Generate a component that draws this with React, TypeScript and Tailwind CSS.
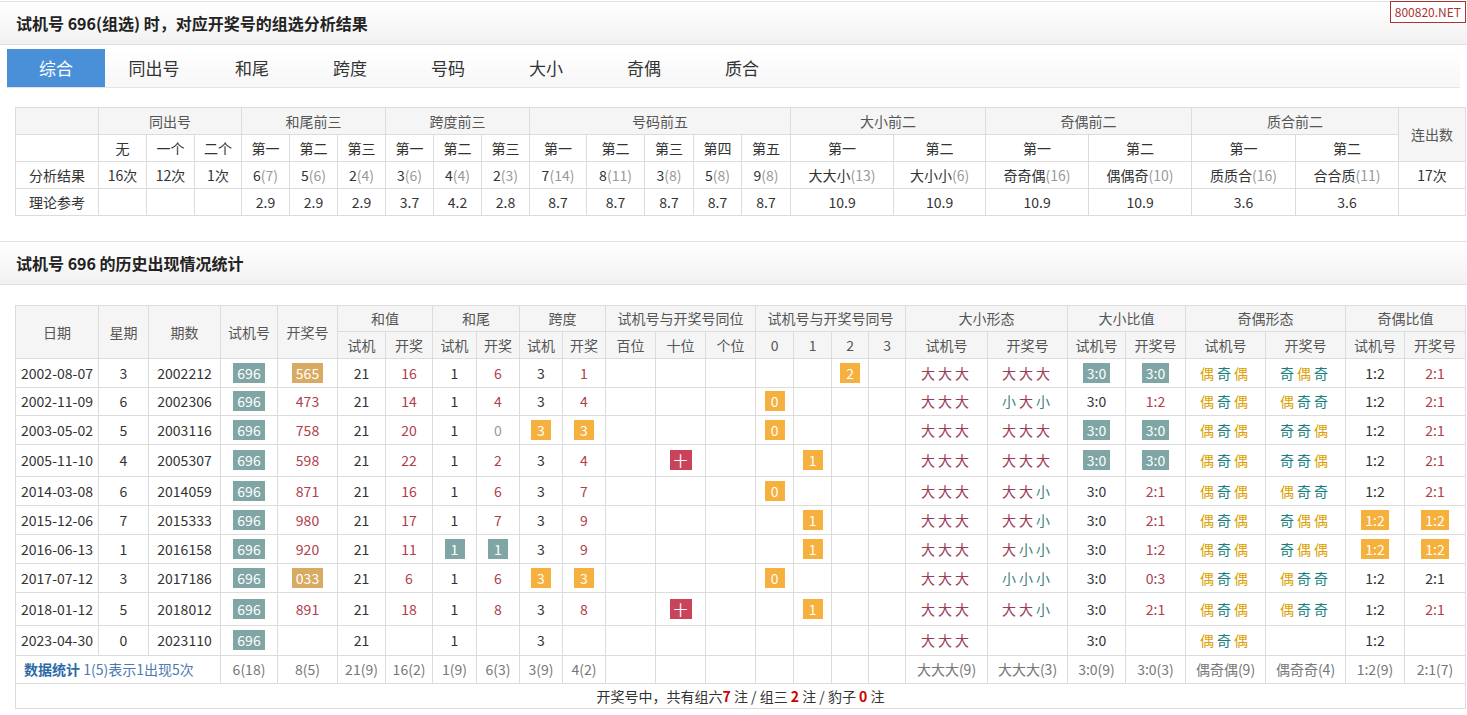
import React from "react";

type C = string | { t: string; c?: string; b?: string };

const R = "text-[#b0404a]";
const TEAL = "bg-[#7fa5a5]";
const TAN = "bg-[#d9ab62]";
const ORG = "bg-[#f6b03e]";
const RED = "bg-[#c9435a]";

function r(t: string): C {
  return { t, c: R };
}
function b(t: string, bg: string): C {
  return { t, b: bg };
}

function Chars({ s }: { s: string }) {
  return (
    <span className="tracking-[3px]">
      {s.split("").map((ch, i) => {
        const cls =
          ch === "大" ? "text-[#9c3d55]" : ch === "小" ? "text-[#3f8080]" : ch === "偶" ? "text-[#dd9f00]" : "text-[#187f80]";
        return (
          <span key={i} className={cls}>
            {ch}
          </span>
        );
      })}
    </span>
  );
}

const E = "";
const rows: C[][] = [
  ["2002-08-07", "3", "2002212", b("696", TEAL), b("565", TAN), "21", r("16"), "1", r("6"), "3", r("1"), E, E, E, E, E, b("2", ORG), E, "大大大", "大大大", b("3:0", TEAL), b("3:0", TEAL), "偶奇偶", "奇偶奇", "1:2", r("2:1")],
  ["2002-11-09", "6", "2002306", b("696", TEAL), r("473"), "21", r("14"), "1", r("4"), "3", r("4"), E, E, E, b("0", ORG), E, E, E, "大大大", "小大小", "3:0", r("1:2"), "偶奇偶", "偶奇奇", "1:2", r("2:1")],
  ["2003-05-02", "5", "2003116", b("696", TEAL), r("758"), "21", r("20"), "1", { t: "0", c: "text-[#999]" }, b("3", ORG), b("3", ORG), E, E, E, b("0", ORG), E, E, E, "大大大", "大大大", b("3:0", TEAL), b("3:0", TEAL), "偶奇偶", "奇奇偶", "1:2", r("2:1")],
  ["2005-11-10", "4", "2005307", b("696", TEAL), r("598"), "21", r("22"), "1", r("2"), "3", r("4"), E, b("十", RED), E, E, b("1", ORG), E, E, "大大大", "大大大", b("3:0", TEAL), b("3:0", TEAL), "偶奇偶", "奇奇偶", "1:2", r("2:1")],
  ["2014-03-08", "6", "2014059", b("696", TEAL), r("871"), "21", r("16"), "1", r("6"), "3", r("7"), E, E, E, b("0", ORG), E, E, E, "大大大", "大大小", "3:0", r("2:1"), "偶奇偶", "偶奇奇", "1:2", r("2:1")],
  ["2015-12-06", "7", "2015333", b("696", TEAL), r("980"), "21", r("17"), "1", r("7"), "3", r("9"), E, E, E, E, b("1", ORG), E, E, "大大大", "大大小", "3:0", r("2:1"), "偶奇偶", "奇偶偶", b("1:2", ORG), b("1:2", ORG)],
  ["2016-06-13", "1", "2016158", b("696", TEAL), r("920"), "21", r("11"), b("1", TEAL), b("1", TEAL), "3", r("9"), E, E, E, E, b("1", ORG), E, E, "大大大", "大小小", "3:0", r("1:2"), "偶奇偶", "奇偶偶", b("1:2", ORG), b("1:2", ORG)],
  ["2017-07-12", "3", "2017186", b("696", TEAL), b("033", TAN), "21", r("6"), "1", r("6"), b("3", ORG), b("3", ORG), E, E, E, b("0", ORG), E, E, E, "大大大", "小小小", "3:0", r("0:3"), "偶奇偶", "偶奇奇", "1:2", "2:1"],
  ["2018-01-12", "5", "2018012", b("696", TEAL), r("891"), "21", r("18"), "1", r("8"), "3", r("8"), E, b("十", RED), E, E, b("1", ORG), E, E, "大大大", "大大小", "3:0", r("2:1"), "偶奇偶", "偶奇奇", "1:2", r("2:1")],
  ["2023-04-30", "0", "2023110", b("696", TEAL), E, "21", E, "1", E, "3", E, E, E, E, E, E, E, E, "大大大", E, "3:0", E, "偶奇偶", E, "1:2", E],
];
const rowH = [29, 28, 29, 32, 29, 29, 29, 29, 33, 30];

const histW = [83, 50, 72, 57, 60, 48, 47, 44, 43, 43, 43, 50, 50, 50, 38, 38, 37, 37, 82, 80, 58, 60, 80, 80, 59, 61];

function Cell({ v, i }: { v: C; i: number }) {
  const isChars = (i === 18 || i === 19 || i === 22 || i === 23) && typeof v === "string" && v !== "";
  if (isChars) return <Chars s={v as string} />;
  if (typeof v === "string") return <>{v}</>;
  if (v.b)
    return (
      <span className={`inline-block ${v.b} text-white px-[4px] leading-[20px] min-w-[20px]`}>{v.t}</span>
    );
  return <span className={v.c}>{v.t}</span>;
}

const sumW = [83, 48, 48, 47, 48, 48, 48, 48, 48, 48, 57, 58, 49, 48, 49, 103, 92, 103, 103, 104, 103, 67];

function Gray({ a, n }: { a: string; n: string }) {
  return (
    <>
      {a}
      <span className="text-[#999]">({n})</span>
    </>
  );
}

function TitleBar({ children }: { children: React.ReactNode }) {
  return (
    <div className="h-[44px] flex items-center px-[16px] bg-gradient-to-b from-white to-[#f1f1f1] border-y border-[#e2e2e2] text-[16px] font-bold text-[#222]">
      {children}
    </div>
  );
}

const td = "border border-[#dcdcdc] text-center font-normal";

export default function App() {
  const tabs = ["综合", "同出号", "和尾", "跨度", "号码", "大小", "奇偶", "质合"];
  return (
    <div
      className="w-[1467px] h-[715px] bg-white text-[#333] text-[14px] relative overflow-hidden"
      style={{ fontFamily: '"Noto Sans CJK SC", "Noto Sans", sans-serif' }}
    >
      <div className="absolute right-[1px] top-[1px] border border-[#a33] text-[#a33] text-[12px] leading-[20px] px-[4px] bg-white z-10">
        800820.NET
      </div>
      <div className="pt-[1px]">
        <TitleBar>试机号 696(组选) 时，对应开奖号的组选分析结果</TitleBar>
      </div>
      <div className="flex h-[39px] mt-[4px] mx-[7px] border-b border-[#e5e5e5] bg-gradient-to-b from-white to-[#f7f7f7]">
        {tabs.map((t, i) => (
          <div
            key={t}
            className={`w-[98px] flex items-center justify-center text-[17px] ${i === 0 ? "bg-[#4a90d9] text-white w-[88px]" : "text-[#333]"}`}
          >
            {t}
          </div>
        ))}
      </div>

      <table className="ml-[15px] mt-[19px] border-collapse table-fixed w-[1450px] text-[14px]">
        <colgroup>
          {sumW.map((w, i) => (
            <col key={i} style={{ width: w }} />
          ))}
        </colgroup>
        <tbody>
          <tr className="h-[27px] bg-[#f5f5f5] text-[#555]">
            <td className={td}></td>
            <td className={td} colSpan={3}>同出号</td>
            <td className={td} colSpan={3}>和尾前三</td>
            <td className={td} colSpan={3}>跨度前三</td>
            <td className={td} colSpan={5}>号码前五</td>
            <td className={td} colSpan={2}>大小前二</td>
            <td className={td} colSpan={2}>奇偶前二</td>
            <td className={td} colSpan={2}>质合前二</td>
            <td className={td} rowSpan={2}>连出数</td>
          </tr>
          <tr className="h-[27px]">
            <td className={td}></td>
            {["无", "一个", "二个", "第一", "第二", "第三", "第一", "第二", "第三", "第一", "第二", "第三", "第四", "第五", "第一", "第二", "第一", "第二", "第一", "第二"].map((t, i) => (
              <td key={i} className={td}>{t}</td>
            ))}
          </tr>
          <tr className="h-[27px]">
            <td className={td}>分析结果</td>
            <td className={td}>16次</td>
            <td className={td}>12次</td>
            <td className={td}>1次</td>
            {[["6", "7"], ["5", "6"], ["2", "4"], ["3", "6"], ["4", "4"], ["2", "3"], ["7", "14"], ["8", "11"], ["3", "8"], ["5", "8"], ["9", "8"], ["大大小", "13"], ["大小小", "6"], ["奇奇偶", "16"], ["偶偶奇", "10"], ["质质合", "16"], ["合合质", "11"]].map(([a, n], i) => (
              <td key={i} className={td}><Gray a={a} n={n} /></td>
            ))}
            <td className={td}>17次</td>
          </tr>
          <tr className="h-[27px]">
            <td className={td}>理论参考</td>
            <td className={td}></td>
            <td className={td}></td>
            <td className={td}></td>
            {["2.9", "2.9", "2.9", "3.7", "4.2", "2.8", "8.7", "8.7", "8.7", "8.7", "8.7", "10.9", "10.9", "10.9", "10.9", "3.6", "3.6"].map((t, i) => (
              <td key={i} className={td}>{t}</td>
            ))}
            <td className={td}></td>
          </tr>
        </tbody>
      </table>

      <div className="mt-[25px]">
        <TitleBar>试机号 696 的历史出现情况统计</TitleBar>
      </div>

      <table className="ml-[15px] mt-[20px] border-collapse table-fixed w-[1450px] text-[14px]">
        <colgroup>
          {histW.map((w, i) => (
            <col key={i} style={{ width: w }} />
          ))}
        </colgroup>
        <tbody>
          <tr className="h-[26px] bg-[#f5f5f5] text-[#555]">
            {["日期", "星期", "期数", "试机号", "开奖号"].map((t) => (
              <td key={t} rowSpan={2} className={td}>{t}</td>
            ))}
            <td className={td} colSpan={2}>和值</td>
            <td className={td} colSpan={2}>和尾</td>
            <td className={td} colSpan={2}>跨度</td>
            <td className={td} colSpan={3}>试机号与开奖号同位</td>
            <td className={td} colSpan={4}>试机号与开奖号同号</td>
            <td className={td} colSpan={2}>大小形态</td>
            <td className={td} colSpan={2}>大小比值</td>
            <td className={td} colSpan={2}>奇偶形态</td>
            <td className={td} colSpan={2}>奇偶比值</td>
          </tr>
          <tr className="h-[27px] bg-[#f5f5f5] text-[#555]">
            {["试机", "开奖", "试机", "开奖", "试机", "开奖", "百位", "十位", "个位", "0", "1", "2", "3", "试机号", "开奖号", "试机号", "开奖号", "试机号", "开奖号", "试机号", "开奖号"].map((t, i) => (
              <td key={i} className={td}>{t}</td>
            ))}
          </tr>
          {rows.map((row, ri) => (
            <tr key={ri} style={{ height: rowH[ri] }}>
              {row.map((v, i) => (
                <td key={i} className={td}><Cell v={v} i={i} /></td>
              ))}
            </tr>
          ))}
          <tr className="h-[28px] text-[#777]">
            <td className={`${td} text-left pl-[8px] whitespace-nowrap overflow-visible`} colSpan={3}>
              <span className="text-[#2b6aa8] font-bold">数据统计</span>
              <span className="text-[#4a7ab0]"> 1(5)表示1出现5次</span>
            </td>
            {["6(18)", "8(5)", "21(9)", "16(2)", "1(9)", "6(3)", "3(9)", "4(2)", "", "", "", "", "", "", "", "大大大(9)", "大大大(3)", "3:0(9)", "3:0(3)", "偶奇偶(9)", "偶奇奇(4)", "1:2(9)", "2:1(7)"].map((t, i) => (
              <td key={i} className={td}>{t}</td>
            ))}
          </tr>
          <tr className="h-[25px]">
            <td className={td} colSpan={26}>
              开奖号中，共有组六<span className="text-[#c00] font-bold">7</span> 注 / 组三 <span className="text-[#c00] font-bold">2</span> 注 / 豹子 <span className="text-[#c00] font-bold">0</span> 注
            </td>
          </tr>
        </tbody>
      </table>
    </div>
  );
}
